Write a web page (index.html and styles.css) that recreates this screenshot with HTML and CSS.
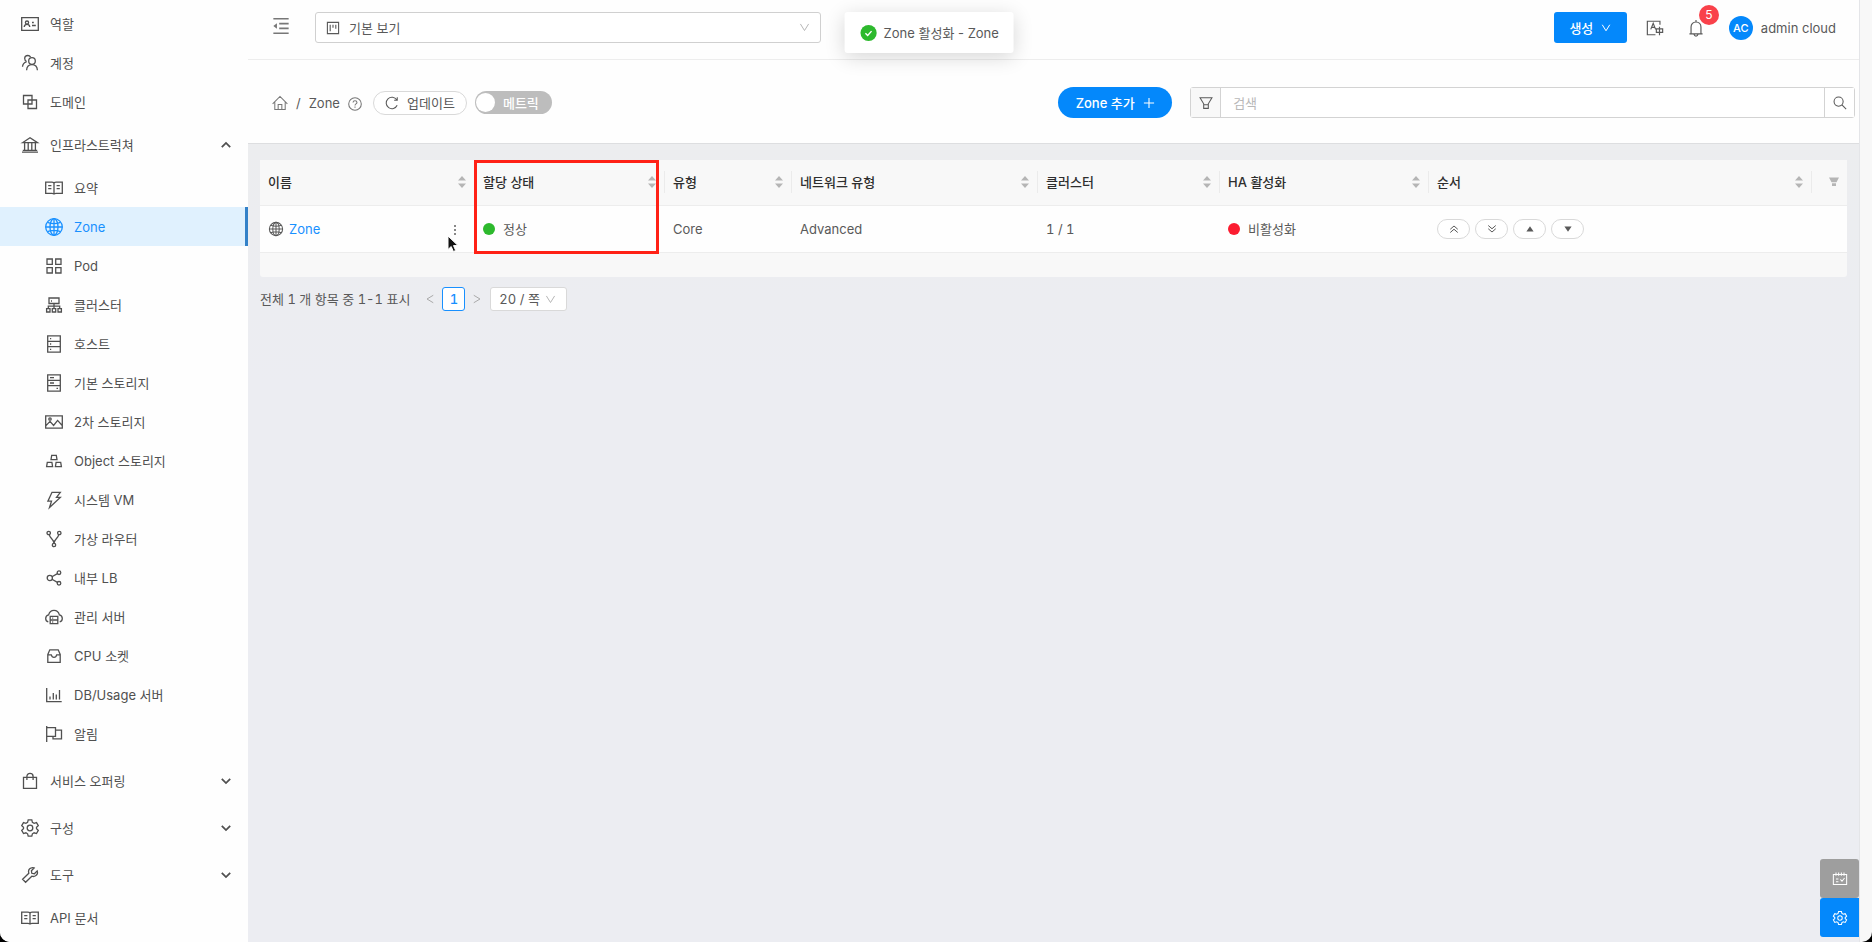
FILE: index.html
```html
<!DOCTYPE html>
<html lang="ko">
<head>
    <meta charset="UTF-8">
    <meta name="viewport" content="width=device-width, initial-scale=1.0">
    <title>Zone</title>
    <link rel="stylesheet" href="styles.css">
</head>
<body>
    <!-- icon set -->
    <svg class="sprite" aria-hidden="true">
        <symbol id="i-idcard" viewBox="0 0 20 20"><path d="M1.7 3.7h16.6v12.6H1.7z"/><circle cx="7" cy="8.6" r="1.6"/><path d="M4.2 13c.2-1.800 1.400-2.700 2.800-2.700s2.600.9 2.800 2.700M12 8.500h1.800M12 11.500h3.800"/></symbol>
        <symbol id="i-team" viewBox="0 0 20 20"><circle cx="12" cy="8" r="3.300"/><path d="M6.600 17.300c.2-3.400 2.400-5.600 5.400-5.600s5.200 2.200 5.400 5.600M10.600 4.200C9.900 3 8.900 2.500 7.900 2.500c-1.900 0-3.200 1.400-3.200 3.100 0 1.400.8 2.500 2 2.900M2.500 13.800c.2-2.600 1.700-4.400 4-5"/></symbol>
        <symbol id="i-block" viewBox="0 0 20 20"><path d="M3.500 3.500h8.500v8.500H3.500zM8 8h8.500v8.500H8z"/></symbol>
        <symbol id="i-bank" viewBox="0 0 20 20"><path d="M2.500 7.700L10 2.800l7.500 4.900zM2 17.200h16M2.800 15.300h14.400M4.600 8v7M8.200 8v7M11.800 8v7M15.400 8v7"/></symbol>
        <symbol id="i-read" viewBox="0 0 20 20"><path d="M1.700 4.200h6.300c1 0 2 .6 2 1.200 0-.6 1-1.200 2-1.200h6.300v11.200H12c-1 0-2 .5-2 1.200 0-.7-1-1.200-2-1.200H1.700zM10 5.400v11M4.200 7.700h3.200M4.200 10.700h3.200M12.600 7.700h3.200M12.600 10.700h3.200"/></symbol>
        <symbol id="i-global" viewBox="0 0 20 20"><circle cx="10" cy="10" r="8.300"/><ellipse cx="10" cy="10" rx="4" ry="8.300"/><path d="M10 1.700v16.600M1.700 10h16.600M3.500 5.300c3.900 1.600 9.100 1.600 13 0M3.500 14.700c3.900-1.600 9.100-1.600 13 0"/></symbol>
        <symbol id="i-appstore" viewBox="0 0 20 20"><path d="M3 3h5.300v5.300H3zM11.700 3H17v5.300h-5.300zM3 11.700h5.300V17H3zM11.700 11.700H17V17h-5.300z"/></symbol>
        <symbol id="i-cluster" viewBox="0 0 20 20"><path d="M5 3h10v5.500H5zM10 8.500v5M4.300 13.500v-2.300h11.400v2.300M2.600 13.700H6V17H2.600zM8.300 13.700h3.400V17H8.300zM14 13.700h3.400V17H14zM7 6h1"/></symbol>
        <symbol id="i-database" viewBox="0 0 20 20"><path d="M3.700 1.900h12.600v16.200H3.700zM3.700 7.300h12.600M3.700 12.700h12.600M6 4.700h1.200M6 10h1.200M6 15.400h1.200"/></symbol>
        <symbol id="i-hdd" viewBox="0 0 20 20"><path d="M3.700 1.900h12.600v16.200H3.700zM3.700 7.300h12.600M3.700 12.700h12.600M6 4.700h4M6 10h4M12.500 15.400H14"/></symbol>
        <symbol id="i-picture" viewBox="0 0 20 20"><path d="M1.700 3.800h16.600v12.400H1.700zM2 13.600l4-4.200 3.600 4 4-5 4.400 4.800"/><circle cx="6" cy="7" r="1.200"/></symbol>
        <symbol id="i-gold" viewBox="0 0 20 20"><path d="M7.700 4.300h4.600l.7 4.400H7zM3.300 11.300h4.600l.7 4.400h-6zM12.100 11.300h4.600l.7 4.400h-6z"/></symbol>
        <symbol id="i-thunder" viewBox="0 0 20 20"><path d="M8 2.300h8.300L12.500 7.400h3.800L5.500 17.500l2-6.300H3.900z"/></symbol>
        <symbol id="i-fork" viewBox="0 0 20 20"><circle cx="4.700" cy="4" r="1.700"/><circle cx="15.300" cy="4" r="1.700"/><circle cx="10" cy="16" r="1.700"/><path d="M5.200 5.700c.8 4 4.800 4.500 4.800 8.600 0-4.100 4-4.600 4.800-8.600"/></symbol>
        <symbol id="i-share" viewBox="0 0 20 20"><circle cx="5.800" cy="10" r="2.600"/><circle cx="15" cy="4.700" r="1.800"/><circle cx="15" cy="15.300" r="1.800"/><path d="M8 8.700l5.400-3.100M8 11.300l5.400 3.100"/></symbol>
        <symbol id="i-cloud" viewBox="0 0 20 20"><path d="M4.300 14.800C2.700 14.400 1.700 13 1.700 11.400c0-1.800 1.200-3.100 2.900-3.500C5.400 5 7.400 3.300 10 3.300s4.600 1.700 5.400 4.600c1.700.4 2.900 1.700 2.900 3.500 0 1.600-1 3-2.600 3.400M6.200 9.300h7.600v7.400H6.200zM6.200 13h7.600M8.200 11.200h1M8.200 15h1"/></symbol>
        <symbol id="i-inbox" viewBox="0 0 20 20"><path d="M3.800 8.500l2-4.700h8.400l2 4.700v7.800H3.800zM3.800 8.800h3.500c.4 1.700 1.400 2.500 2.700 2.500s2.300-.8 2.700-2.500h3.500"/></symbol>
        <symbol id="i-chart" viewBox="0 0 20 20"><path d="M2.700 3v13.700h15M6 11.500v3M9.300 8v6.500M12.300 9.500v5M15.500 5v9.500"/></symbol>
        <symbol id="i-flag" viewBox="0 0 20 20"><path d="M2.700 2v16M2.700 3.700h8.800v8.600H2.700M11.500 6.200h6v8.600H9v-2.500"/></symbol>
        <symbol id="i-bag" viewBox="0 0 20 20"><path d="M3.500 6.300h13v11h-13zM6.900 9V5.500c0-1.900 1.300-3.100 3.100-3.100s3.100 1.200 3.100 3.100V9"/></symbol>
        <symbol id="i-setting" viewBox="0 0 20 20"><circle cx="10" cy="10" r="2.800"/><path d="M8.200 1.900h3.600l.6 2.400 1.700 1 2.400-.7 1.800 3.100-1.800 1.700v1.300l1.800 1.700-1.800 3.100-2.400-.7-1.700 1-.6 2.300H8.200l-.6-2.300-1.700-1-2.400.7-1.800-3.100 1.800-1.700V9.400L1.700 7.700l1.800-3.100 2.400.7 1.700-1z"/></symbol>
        <symbol id="i-tool" viewBox="0 0 20 20"><path d="M17.200 5.900c.7 2.100-.1 4-1.600 4.900-1.200.8-2.600.8-3.800.4l-6.200 6.100-3-3 6.200-6.100C7.900 5.400 9.200 3.300 11.500 2.800c.9-.3 1.800-.2 2.600.1l-2.700 2.800.4 2.600 2.600.4z"/></symbol>
        <symbol id="i-fold" viewBox="0 0 20 20"><path d="M1.500 2h17M8 7.300h10.500M8 12.700h10.500M1.500 18h17"/><path class="solid" d="M1.500 10l4-3v6z"/></symbol>
        <symbol id="i-project" viewBox="0 0 20 20"><path d="M2 2h16v16H2zM6 5.500v9M10 5.500v4M14 5.500v5.500"/></symbol>
        <symbol id="i-down" viewBox="0 0 20 20"><path d="M2.500 3.500l7.500 12 7.500-12"/></symbol>
        <symbol id="i-left" viewBox="0 0 20 20"><path d="M16.500 2.500L4 10l12.500 7.500"/></symbol>
        <symbol id="i-right" viewBox="0 0 20 20"><path d="M3.500 2.500L16 10 3.500 17.500"/></symbol>
        <symbol id="i-caret" viewBox="0 0 20 20"><path d="M3 6.500l7 7 7-7"/></symbol>
        <symbol id="i-check" viewBox="0 0 20 20"><circle class="solid" cx="10" cy="10" r="9"/><path class="tick" d="M6.500 10.200l2.500 2.500 4.300-4.800"/></symbol>
        <symbol id="i-lang" viewBox="0 0 20 20"><path d="M15.500 6.500V2.500h-14v15h9M5.300 11.500L8 4.800l2.700 6.700M6.300 9.300h3.400M11.500 11h7v3.800h-7zM15 8.500v9.500"/></symbol>
        <symbol id="i-bell" viewBox="0 0 20 20"><path d="M2.700 16.500h14.600M4.500 16.300V9c0-3.300 2.300-5.700 5.500-5.700s5.500 2.400 5.500 5.700v7.300M10 3.300V1M7.800 17.200c.3 1.200 1 1.800 2.200 1.800s1.900-.6 2.200-1.800"/></symbol>
        <symbol id="i-home" viewBox="0 0 20 20"><path d="M.8 11L10 1.800l9.200 9.200M3.500 9v9.200h13V9M7.700 18v-6h4.600v6"/></symbol>
        <symbol id="i-help" viewBox="0 0 20 20"><circle cx="10" cy="10" r="9"/><path d="M7.200 8c0-1.700 1.200-2.700 2.800-2.700s2.800 1 2.800 2.500c0 2-2.800 2.100-2.800 4.200M10 13.700v1.600"/></symbol>
        <symbol id="i-reload" viewBox="0 0 20 20"><path d="M17.400 13.200a8.200 8.200 0 1 1-.6-7.800M17.500 1.800v4.400h-4.400"/></symbol>
        <symbol id="i-plus" viewBox="0 0 20 20"><path d="M10 1.500v17M1.500 10h17"/></symbol>
        <symbol id="i-filter" viewBox="0 0 20 20"><path d="M1.500 2.500h17l-5.200 8.700v6.500H6.700v-6.500zM6.700 12.500h6.600"/></symbol>
        <symbol id="i-filter-solid" viewBox="0 0 20 20"><path class="solid" d="M0 1h20l-5 9.500H5zM6 12.500h8V18H6z"/></symbol>
        <symbol id="i-search" viewBox="0 0 20 20"><circle cx="8" cy="8" r="6.500"/><path d="M12.800 12.800l6 6"/></symbol>
        <symbol id="i-sorter" viewBox="0 0 10 14"><path class="solid" d="M5 1l4 4.500H1zM5 13L1 8.500h8z"/></symbol>
        <symbol id="i-more" viewBox="0 0 4 12"><path class="solid" d="M1 1h2v2H1zM1 5h2v2H1zM1 9h2v2H1z"/></symbol>
        <symbol id="i-dup" viewBox="0 0 20 20"><path d="M2.500 10.500L10 4l7.500 6.500M2.500 17L10 10.500l7.500 6.500"/></symbol>
        <symbol id="i-ddown" viewBox="0 0 20 20"><path d="M2.500 3L10 9.500 17.500 3M2.500 9.500L10 16l7.500-6.500"/></symbol>
        <symbol id="i-tri-up" viewBox="0 0 20 20"><path class="solid" d="M10 3l9 13H1z"/></symbol>
        <symbol id="i-tri-down" viewBox="0 0 20 20"><path class="solid" d="M10 17L1 4h18z"/></symbol>
        <symbol id="i-calendar" viewBox="0 0 20 20"><path d="M1.700 4.500h16.600v12.300H1.700zM5 2v4M8.300 2v4M11.700 2v4M15 2v4M5 10h3M5 13.500h3M10.500 10.500l2 2.300 3.200-4"/></symbol>
    </svg>

    <div class="app">
        <nav class="sidebar">
            <a class="item" href="#"><svg class="icon"><use href="#i-idcard"/></svg>역할</a>
            <a class="item" href="#"><svg class="icon"><use href="#i-team"/></svg>계정</a>
            <a class="item" href="#"><svg class="icon"><use href="#i-block"/></svg>도메인</a>
            <a class="item group" href="#"><svg class="icon"><use href="#i-bank"/></svg>인프라스트럭쳐<svg class="caret up"><use href="#i-caret"/></svg></a>
            <div class="submenu">
                <a class="item" href="#"><svg class="icon"><use href="#i-read"/></svg>요약</a>
                <a class="item active" href="#"><svg class="icon"><use href="#i-global"/></svg>Zone</a>
                <a class="item" href="#"><svg class="icon"><use href="#i-appstore"/></svg>Pod</a>
                <a class="item" href="#"><svg class="icon"><use href="#i-cluster"/></svg>클러스터</a>
                <a class="item" href="#"><svg class="icon"><use href="#i-database"/></svg>호스트</a>
                <a class="item" href="#"><svg class="icon"><use href="#i-hdd"/></svg>기본 스토리지</a>
                <a class="item" href="#"><svg class="icon"><use href="#i-picture"/></svg>2차 스토리지</a>
                <a class="item" href="#"><svg class="icon"><use href="#i-gold"/></svg>Object 스토리지</a>
                <a class="item" href="#"><svg class="icon"><use href="#i-thunder"/></svg>시스템 VM</a>
                <a class="item" href="#"><svg class="icon"><use href="#i-fork"/></svg>가상 라우터</a>
                <a class="item" href="#"><svg class="icon"><use href="#i-share"/></svg>내부 LB</a>
                <a class="item" href="#"><svg class="icon"><use href="#i-cloud"/></svg>관리 서버</a>
                <a class="item" href="#"><svg class="icon"><use href="#i-inbox"/></svg>CPU 소켓</a>
                <a class="item" href="#"><svg class="icon"><use href="#i-chart"/></svg>DB/Usage 서버</a>
                <a class="item" href="#"><svg class="icon"><use href="#i-flag"/></svg>알림</a>
            </div>
            <a class="item group" href="#"><svg class="icon"><use href="#i-bag"/></svg>서비스 오퍼링<svg class="caret"><use href="#i-caret"/></svg></a>
            <a class="item group" href="#"><svg class="icon"><use href="#i-setting"/></svg>구성<svg class="caret"><use href="#i-caret"/></svg></a>
            <a class="item group" href="#"><svg class="icon"><use href="#i-tool"/></svg>도구<svg class="caret"><use href="#i-caret"/></svg></a>
            <a class="item" href="#"><svg class="icon"><use href="#i-read"/></svg>API 문서</a>
        </nav>

        <div class="content">
            <header class="topbar">
                <button class="plain" aria-label="메뉴 접기"><svg class="fold"><use href="#i-fold"/></svg></button>
                <div class="project">
                    <svg class="project-icon"><use href="#i-project"/></svg>
                    <select aria-label="프로젝트"><option>기본 보기</option></select>
                    <svg class="arrow"><use href="#i-down"/></svg>
                </div>
                <div class="user">
                    <button class="create">생성<svg class="s10"><use href="#i-down"/></svg></button>
                    <button class="plain" aria-label="언어"><svg class="s18"><use href="#i-lang"/></svg></button>
                    <button class="plain bell" aria-label="알림"><svg class="s18"><use href="#i-bell"/></svg><span class="badge">5</span></button>
                    <a class="account" href="#"><span class="avatar">AC</span>admin cloud</a>
                </div>
            </header>

            <div class="toolbar">
                <a class="home" href="#" aria-label="홈"><svg class="s16"><use href="#i-home"/></svg></a>
                <span class="slash">/</span>
                <span>Zone</span>
                <button class="plain help" aria-label="도움말"><svg class="s14"><use href="#i-help"/></svg></button>
                <button class="refresh"><svg class="s14"><use href="#i-reload"/></svg>업데이트</button>
                <label class="switch"><input type="checkbox"><span class="knob"></span>메트릭</label>
                <button class="add">Zone 추가<svg class="s12"><use href="#i-plus"/></svg></button>
                <div class="search">
                    <button class="filter" aria-label="필터"><svg class="s14"><use href="#i-filter"/></svg></button>
                    <input type="text" placeholder="검색" aria-label="검색">
                    <button class="go" aria-label="찾기"><svg class="s14"><use href="#i-search"/></svg></button>
                </div>
            </div>

            <main>
                <div class="table-box">
                    <table>
                        <colgroup>
                            <col class="c-name"><col class="c-state"><col class="c-type"><col class="c-net"><col class="c-cluster"><col class="c-ha"><col><col class="c-filter">
                        </colgroup>
                        <thead>
                            <tr>
                                <th><div>이름<svg class="sorter"><use href="#i-sorter"/></svg></div></th>
                                <th><div>할당 상태<svg class="sorter"><use href="#i-sorter"/></svg></div></th>
                                <th><div>유형<svg class="sorter"><use href="#i-sorter"/></svg></div></th>
                                <th><div>네트워크 유형<svg class="sorter"><use href="#i-sorter"/></svg></div></th>
                                <th><div>클러스터<svg class="sorter"><use href="#i-sorter"/></svg></div></th>
                                <th><div>HA 활성화<svg class="sorter"><use href="#i-sorter"/></svg></div></th>
                                <th><div>순서<svg class="sorter"><use href="#i-sorter"/></svg></div></th>
                                <th class="filter-cell"><svg class="s10"><use href="#i-filter-solid"/></svg></th>
                            </tr>
                        </thead>
                        <tbody>
                            <tr>
                                <td><div class="name"><svg class="s16"><use href="#i-global"/></svg><a href="#">Zone</a><button class="plain more" aria-label="더보기"><svg><use href="#i-more"/></svg></button></div></td>
                                <td><span class="dot green"></span>정상</td>
                                <td>Core</td>
                                <td>Advanced</td>
                                <td>1 / 1</td>
                                <td><span class="dot red"></span>비활성화</td>
                                <td colspan="2">
                                    <div class="order">
                                        <button aria-label="맨 위로"><svg class="s10"><use href="#i-dup"/></svg></button>
                                        <button aria-label="맨 아래로"><svg class="s10"><use href="#i-ddown"/></svg></button>
                                        <button aria-label="위로"><svg class="s8"><use href="#i-tri-up"/></svg></button>
                                        <button aria-label="아래로"><svg class="s8"><use href="#i-tri-down"/></svg></button>
                                    </div>
                                </td>
                            </tr>
                        </tbody>
                    </table>
                    <div class="table-foot"></div>
                    <div class="highlight"></div>
                    <svg class="cursor" viewBox="0 0 12 18"><path d="M1 1v13.500l3.200-3 2.200 5 2.300-1-2.200-4.900H11z"/></svg>
                </div>

                <div class="pagination">
                    <span>전체 1 개 항목 중 1-1 표시</span>
                    <button class="plain prev" aria-label="이전"><svg class="s10"><use href="#i-left"/></svg></button>
                    <button class="page">1</button>
                    <button class="plain next" aria-label="다음"><svg class="s10"><use href="#i-right"/></svg></button>
                    <div class="size">
                        <select aria-label="쪽 크기"><option>20 / 쪽</option></select>
                        <svg class="arrow"><use href="#i-down"/></svg>
                    </div>
                </div>
            </main>
        </div>

        <div class="toast"><svg class="s18"><use href="#i-check"/></svg>Zone 활성화 - Zone</div>
        <div class="floating">
            <button class="gray" aria-label="일정"><svg class="s16"><use href="#i-calendar"/></svg></button>
            <button aria-label="설정"><svg class="s16"><use href="#i-setting"/></svg></button>
        </div>
    </div>
</body>
</html>
```
FILE: styles.css
```css
* {
    box-sizing: border-box;
}

html {
    background: #000;
}

body {
    margin: 0;
    font-family: Inter, "Noto Sans CJK KR", sans-serif;
    font-size: 13px;
    line-height: 20px;
    color: #595959;
}

a {
    color: inherit;
    text-decoration: none;
}

button, select, input {
    font: inherit;
    color: inherit;
    cursor: pointer;
}

button {
    padding: 0;
    background: #fff;
    border: 1px solid #d9d9d9;
    display: flex;
    align-items: center;
    justify-content: center;
}

.plain {
    background: none;
    border: none;
}

/* icons */
.sprite {
    position: absolute;
    width: 0;
    height: 0;
}

svg {
    display: block;
    flex: none;
    fill: none;
    stroke: currentColor;
    stroke-width: 1.3;
}

.solid {
    fill: currentColor;
    stroke: none;
}

.tick {
    stroke: #fff;
    stroke-width: 1.6;
}

.icon {
    width: 20px;
    height: 20px;
}

.s18 { width: 18px; height: 18px; }
.s16 { width: 16px; height: 16px; }
.s14 { width: 14px; height: 14px; stroke-width: 1.5; }
.s12 { width: 12px; height: 12px; stroke-width: 1.8; }
.s10 { width: 10px; height: 10px; stroke-width: 2; }
.s8 { width: 8px; height: 8px; }

.app {
    position: relative;
    display: flex;
    min-height: 100vh;
    padding-right: 12px;
    background: #f8f8f8;
    border-radius: 0 0 10px 10px;
    overflow: hidden;
}

/* sidebar */
.sidebar {
    flex: none;
    width: 248px;
    padding-top: 4px;
    background: #fefefe;
}

.item {
    display: flex;
    align-items: center;
    gap: 10px;
    height: 39px;
    padding-left: 20px;
    color: #505050;
}

.group {
    height: 47px;
    padding-right: 16px;
}

.submenu {
    padding-bottom: 4px;
}

.submenu .item {
    padding-left: 44px;
}

.submenu .active {
    color: #1890ff;
    background: #e0f1fe;
    border-right: 3px solid #3381c8;
}

.caret {
    width: 12px;
    height: 12px;
    margin-left: auto;
    stroke-width: 3;
}

.up {
    transform: rotate(180deg);
}

/* top bar */
.content {
    flex: 1;
    display: flex;
    flex-direction: column;
    min-width: 0;
    border-right: 1px solid #e4e5e8;
}

.topbar {
    display: flex;
    align-items: center;
    height: 60px;
    padding: 0 23px 4px 24px;
    background: #fefefe;
    border-bottom: 1px solid #ededed;
}

.fold {
    width: 18px;
    height: 18px;
    margin-bottom: 4px;
    color: #777;
    stroke-width: 1.8;
}

.project {
    position: relative;
    flex: 0 1 506px;
    margin-left: 25px;
}

.project select, .size select {
    width: 100%;
    height: 31px;
    padding: 0 33px;
    background: #fff;
    border: 1px solid #d0d0d0;
    border-radius: 3px;
    appearance: none;
}

.project select {
    display: block;
}

.project-icon {
    position: absolute;
    left: 11px;
    top: 9px;
    width: 14px;
    height: 14px;
    stroke-width: 1.6;
}

.arrow {
    position: absolute;
    right: 11px;
    top: 10px;
    width: 11px;
    height: 11px;
    color: #b5b5b5;
    stroke-width: 1.8;
    pointer-events: none;
}

.user {
    display: flex;
    align-items: center;
    margin-left: auto;
}

.create {
    gap: 8px;
    width: 73px;
    height: 31px;
    margin-right: 19px;
    color: #fff;
    font-weight: 500;
    background: #0488fb;
    border: none;
    border-radius: 3px;
}

.bell {
    position: relative;
    margin: 0 24px 0 23px;
}

.badge {
    position: absolute;
    left: 12px;
    top: -14px;
    width: 20px;
    height: 20px;
    color: #fff;
    font-size: 12px;
    background: #f9414a;
    border-radius: 10px;
}

.account {
    display: flex;
    align-items: center;
    gap: 8px;
}

.avatar {
    width: 24px;
    height: 24px;
    color: #fff;
    font-size: 11px;
    font-weight: 500;
    line-height: 24px;
    text-align: center;
    background: #0488fb;
    border-radius: 12px;
}

/* breadcrumb and search */
.toolbar {
    display: flex;
    align-items: center;
    height: 84px;
    padding: 2px 4px 0 24px;
    background: #fefefe;
    border-bottom: 1px solid #dddee0;
}

.home, .help {
    color: #777;
}

.slash {
    margin: 0 8px;
}

.help {
    margin: 2px 11px 0 8px;
}

.refresh {
    gap: 8px;
    width: 94px;
    height: 24px;
    margin-right: 8px;
    border-radius: 12px;
}

.switch {
    display: flex;
    align-items: center;
    gap: 8px;
    width: 77px;
    height: 23px;
    padding-left: 1px;
    color: #fff;
    font-weight: 500;
    background: #bdbdbd;
    border-radius: 12px;
    cursor: pointer;
}

.switch input {
    position: absolute;
    opacity: 0;
}

.knob {
    width: 19px;
    height: 19px;
    background: #fff;
    border-radius: 10px;
}

.add {
    gap: 8px;
    width: 114px;
    height: 31px;
    margin: 0 18px 0 auto;
    color: #fff;
    font-weight: 500;
    background: #0488fb;
    border: none;
    border-radius: 16px;
}

.search {
    display: flex;
    width: 42%;
    height: 31px;
    background: #fff;
    border: 1px solid #d3d3d3;
    border-radius: 3px;
}

.search input {
    flex: 1;
    min-width: 0;
    padding: 0 12px;
    background: none;
    border: none;
    outline: none;
    cursor: text;
}

.search input::placeholder {
    color: #b8b8b8;
}

.search button {
    width: 30px;
    border: none;
}

.search .filter {
    background: #f8f8f8;
    border-right: 1px solid #d3d3d3;
}

.search .go {
    border-left: 1px solid #d3d3d3;
}

/* table */
main {
    flex: 1;
    padding: 16px 12px;
    font-variant-numeric: tabular-nums;
    background: linear-gradient(#ecedef, #ecedf2 30%);
}

.table-box {
    position: relative;
}

table {
    width: 100%;
    table-layout: fixed;
    border-collapse: collapse;
    background: #fefefe;
}

.c-name { width: 215px; }
.c-state { width: 190px; }
.c-type { width: 127px; }
.c-net { width: 246px; }
.c-cluster { width: 182px; }
.c-ha { width: 209px; }
.c-filter { width: 35px; }

th, td {
    padding: 0 8px;
    text-align: left;
    border-bottom: 1px solid #ededed;
}

th {
    height: 45px;
    padding: 0;
    color: #2e2e2e;
    font-weight: 500;
    background: #f8f8f8;
}

th div {
    display: flex;
    align-items: center;
    justify-content: space-between;
    height: 22px;
    padding: 0 7px 0 8px;
    border-right: 1px solid #ebebeb;
}

td {
    height: 47px;
}

.sorter {
    width: 10px;
    height: 14px;
    color: #b5b5b5;
}

.filter-cell svg {
    margin: 0 8px 0 auto;
    color: #b5b5b5;
}

.name {
    display: flex;
    align-items: center;
    gap: 5px;
}

.name a {
    color: #1890ff;
}

.more {
    margin: 2px 10px 0 auto;
    color: #888;
}

.more svg {
    width: 4px;
    height: 12px;
}

.dot {
    display: inline-block;
    width: 12px;
    height: 12px;
    margin-right: 8px;
    border-radius: 6px;
    vertical-align: -1px;
}

.green { background: #2db92d; }
.red { background: #fb1c30; }

.order {
    display: flex;
    gap: 5px;
}

.order button {
    width: 33px;
    height: 20px;
    border-radius: 10px;
}

.table-foot {
    height: 24px;
    background: #f8f8f8;
    border-radius: 0 0 3px 3px;
}

.highlight {
    position: absolute;
    left: 214px;
    top: 0;
    width: 185px;
    height: 94px;
    border: 3px solid #ff2116;
}

.cursor {
    position: absolute;
    left: 187px;
    top: 75px;
    width: 12px;
    height: 18px;
    fill: #111;
    stroke: #fff;
    stroke-width: 1;
}

/* pagination */
.pagination {
    display: flex;
    align-items: center;
    height: 24px;
    margin-top: 10px;
}

.prev {
    margin: 0 7px 0 15px;
    color: #aaa;
}

.next {
    margin: 0 8px 0 7px;
    color: #aaa;
}

.page {
    width: 23px;
    height: 24px;
    color: #1890ff;
    font-weight: 500;
    border-color: #1890ff;
    border-radius: 3px;
}

.size {
    position: relative;
    width: 77px;
}

.size select {
    display: block;
    height: 24px;
    padding: 0 8px;
    border-color: #d9d9d9;
}

.size .arrow {
    top: 7px;
}

/* overlays */
.toast {
    position: absolute;
    left: 50%;
    top: 12px;
    display: flex;
    align-items: center;
    gap: 6px;
    height: 41px;
    padding: 0 15px;
    background: #fff;
    border-radius: 3px;
    box-shadow: 0 4px 20px rgba(0, 0, 0, 0.16);
    transform: translateX(-54%);
}

.toast svg {
    color: #2db92d;
}

.floating {
    position: absolute;
    right: 13px;
    bottom: 5px;
}

.floating button {
    width: 39px;
    height: 39px;
    color: #fff;
    background: #0488fb;
    border: none;
    border-radius: 3px 0 0 3px;
}

.floating .gray {
    background: #9e9e9e;
    border-radius: 3px;
}
```
